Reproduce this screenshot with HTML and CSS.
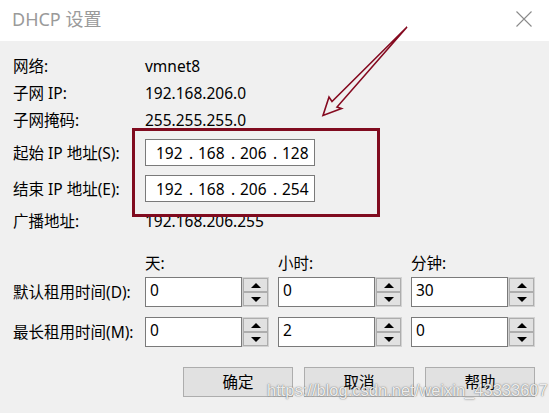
FILE: index.html
```html
<!DOCTYPE html>
<html lang="zh-CN">
<head>
<meta charset="utf-8">
<title>DHCP 设置</title>
<link rel="stylesheet" href="styles.css">
</head>
<body>
<div class="dialog">
  <header class="titlebar">
    <span class="title">DHCP 设置</span>
    <svg class="close" width="16" height="16" viewBox="0 0 16 16" aria-label="关闭"><path d="M0.5 0.5L15.5 15.5M15.5 0.5L0.5 15.5" stroke="#8a8a8a" stroke-width="1.1" fill="none"/></svg>
  </header>
  <main class="content">
    <section class="info">
      <div class="row"><span class="label">网络:</span><span class="value">vmnet8</span></div>
      <div class="row"><span class="label">子网 IP:</span><span class="value">192.168.206.0</span></div>
      <div class="row"><span class="label">子网掩码:</span><span class="value">255.255.255.0</span></div>
      <div class="row field-start"><span class="label">起始 IP 地址(S):</span>
        <div class="ipbox"><span class="oct">192</span><span class="dot">.</span><span class="oct">168</span><span class="dot">.</span><span class="oct">206</span><span class="dot">.</span><span class="oct">128</span></div>
      </div>
      <div class="row field-end"><span class="label">结束 IP 地址(E):</span>
        <div class="ipbox"><span class="oct">192</span><span class="dot">.</span><span class="oct">168</span><span class="dot">.</span><span class="oct">206</span><span class="dot">.</span><span class="oct">254</span></div>
      </div>
      <div class="row broadcast"><span class="label">广播地址:</span><span class="value">192.168.206.255</span></div>
    </section>

    <section class="lease">
      <span class="head blank"></span>
      <span class="head">天:</span>
      <span class="head">小时:</span>
      <span class="head">分钟:</span>

      <span class="lease-label">默认租用时间(D):</span>
      <div class="spinner"><div class="spin-input">0</div><div class="spin-btns"><div class="spin-btn"><span class="tri up"></span></div><div class="spin-btn"><span class="tri down"></span></div></div></div>
      <div class="spinner"><div class="spin-input">0</div><div class="spin-btns"><div class="spin-btn"><span class="tri up"></span></div><div class="spin-btn"><span class="tri down"></span></div></div></div>
      <div class="spinner"><div class="spin-input">30</div><div class="spin-btns"><div class="spin-btn"><span class="tri up"></span></div><div class="spin-btn"><span class="tri down"></span></div></div></div>

      <span class="lease-label">最长租用时间(M):</span>
      <div class="spinner"><div class="spin-input">0</div><div class="spin-btns"><div class="spin-btn"><span class="tri up"></span></div><div class="spin-btn"><span class="tri down"></span></div></div></div>
      <div class="spinner"><div class="spin-input">2</div><div class="spin-btns"><div class="spin-btn"><span class="tri up"></span></div><div class="spin-btn"><span class="tri down"></span></div></div></div>
      <div class="spinner"><div class="spin-input">0</div><div class="spin-btns"><div class="spin-btn"><span class="tri up"></span></div><div class="spin-btn"><span class="tri down"></span></div></div></div>
    </section>

    <footer class="buttons">
      <button class="btn">确定</button>
      <button class="btn">取消</button>
      <button class="btn">帮助</button>
    </footer>
  </main>

  <div class="highlight"></div>
  <svg class="arrow" width="549" height="413" viewBox="0 0 549 413">
    <polygon points="407,27 337,107 341.5,108.5 323,115.5 329,97 332,101.5" fill="none" stroke="#850a20" stroke-width="1.6" stroke-linejoin="miter"/>
  </svg>
  <div class="watermark">https://blog.csdn.net/weixin_43333607</div>
</div>
</body>
</html>
```

FILE: styles.css
```css
* { box-sizing: border-box; }

body {
  margin: 0;
  font-family: "Noto Sans", "Noto Sans CJK SC", sans-serif;
  font-size: 15.5px;
  color: #000;
  background: #f0f0f0;
}

.dialog {
  position: relative;
  width: 549px;
  height: 413px;
  background: #f0f0f0;
  overflow: hidden;
}

.titlebar {
  height: 41px;
  background: #fff;
  display: flex;
  align-items: center;
  justify-content: space-between;
  padding: 0 17px 4px 12px;
}

.title {
  font-size: 18px;
  line-height: 1;
  color: #9a9a9a;
}

.close { display: block; }

.content {
  padding: 11px 14px 0 13px;
}

.info {
  display: flex;
  flex-direction: column;
}

.row {
  display: flex;
  align-items: center;
  height: 27px;
  line-height: 20px;
}

.label {
  width: 132px;
  flex: none;
}

.field-start { margin-top: 6px; }
.field-end { margin-top: 9px; }
.broadcast { margin-top: 5px; }

.ipbox {
  width: 170px;
  height: 27px;
  border: 1px solid #7a7a7a;
  background: #fff;
  display: flex;
  align-items: center;
  padding-left: 10px;
}

.oct { width: 31px; }
.dot { width: 11px; padding-left: 2px; }

.lease {
  display: grid;
  grid-template-columns: 123px repeat(3, 124px);
  grid-template-rows: 24px 40px 30px;
  column-gap: 9px;
  margin-top: 19px;
}

.head {
  align-self: start;
  line-height: 20px;
  height: 20px;
}

.lease-label {
  align-self: start;
  height: 30px;
  display: flex;
  align-items: center;
  line-height: 20px;
  white-space: nowrap;
}

.spinner {
  align-self: start;
  display: flex;
  height: 30px;
}

.spin-input {
  width: 97px;
  height: 30px;
  border: 1px solid #7a7a7a;
  background: #fff;
  padding: 3px 4px 0;
  line-height: 18px;
}

.spin-btns {
  width: 27px;
  height: 30px;
  border: 1px solid #d2d2d2;
  display: flex;
  flex-direction: column;
}

.spin-btn {
  flex: 1;
  border: 1px solid #adadad;
  background: #e1e1e1;
  display: flex;
  align-items: center;
  justify-content: center;
}

.tri {
  width: 0;
  height: 0;
  border-left: 5px solid transparent;
  border-right: 5px solid transparent;
}

.tri.up { border-bottom: 5px solid #000; }
.tri.down { border-top: 5px solid #000; }

.buttons {
  display: flex;
  justify-content: flex-end;
  gap: 11px;
  margin-top: 20px;
}

.btn {
  width: 110px;
  height: 30px;
  border: 1px solid #adadad;
  background: #e1e1e1;
  font-family: inherit;
  font-size: 15.5px;
  color: #000;
  padding: 0;
  line-height: 20px;
}

.highlight {
  position: absolute;
  left: 132px;
  top: 128px;
  width: 248px;
  height: 89px;
  border: 3px solid #800b1f;
  pointer-events: none;
}

.arrow {
  position: absolute;
  left: 0;
  top: 0;
  pointer-events: none;
}

.watermark {
  position: absolute;
  left: 267px;
  top: 382px;
  font-family: "Liberation Sans", Arial, sans-serif;
  font-size: 16.5px;
  line-height: 16.5px;
  color: rgba(255, 255, 255, 0.9);
  text-shadow: 0 0 1px rgba(70, 70, 70, 0.8), 0 0 2px rgba(120, 120, 120, 0.5);
  white-space: nowrap;
  pointer-events: none;
}
```
